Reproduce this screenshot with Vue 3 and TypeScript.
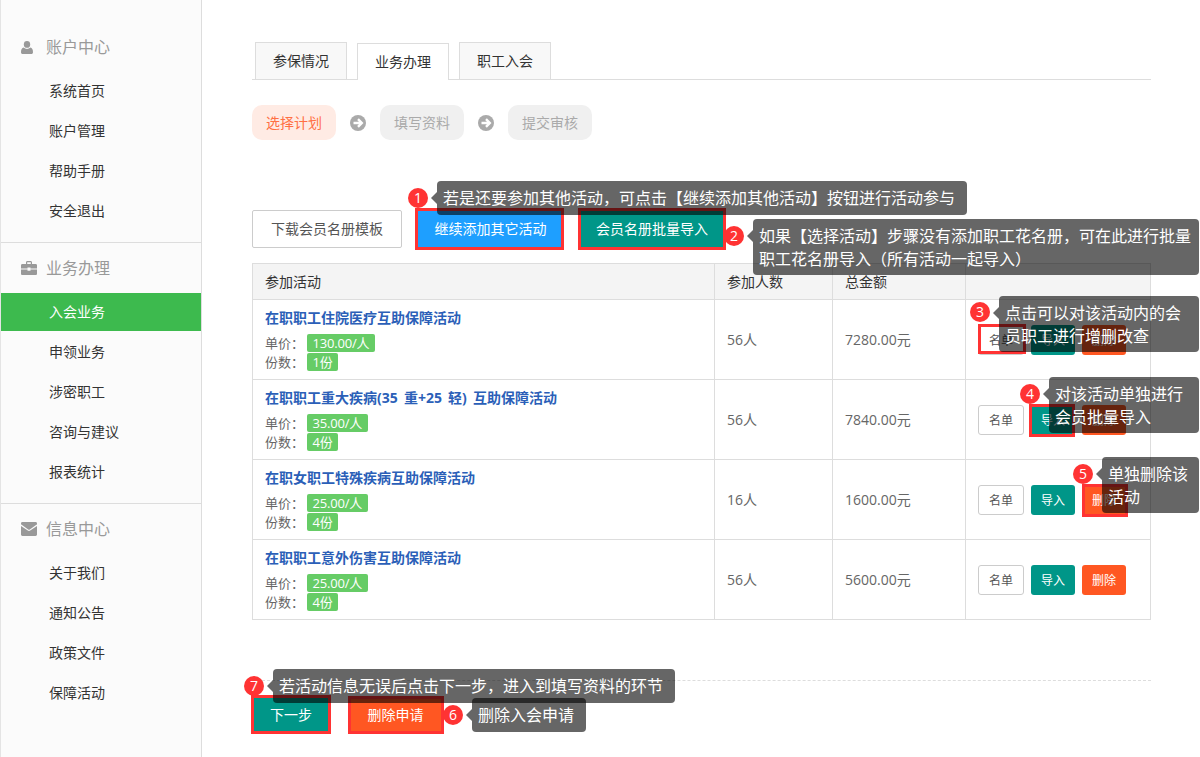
<script setup lang="ts">
interface NavGroup { title: string; icon: 'user' | 'case' | 'mail'; items: string[] }
const nav: NavGroup[] = [
  { title: '账户中心', icon: 'user', items: ['系统首页', '账户管理', '帮助手册', '安全退出'] },
  { title: '业务办理', icon: 'case', items: ['入会业务', '申领业务', '涉密职工', '咨询与建议', '报表统计'] },
  { title: '信息中心', icon: 'mail', items: ['关于我们', '通知公告', '政策文件', '保障活动'] },
]
const tabs = ['参保情况', '业务办理', '职工入会']
const rows = [
  { name: '在职职工住院医疗互助保障活动', price: '130.00/人', share: '1份', people: '56人', total: '7280.00元' },
  { name: '在职职工重大疾病(35 重+25 轻) 互助保障活动', price: '35.00/人', share: '4份', people: '56人', total: '7840.00元' },
  { name: '在职女职工特殊疾病互助保障活动', price: '25.00/人', share: '4份', people: '16人', total: '1600.00元' },
  { name: '在职职工意外伤害互助保障活动', price: '25.00/人', share: '4份', people: '56人', total: '5600.00元' },
]
const notes = [
  { id: 1, text: '若是还要参加其他活动，可点击【继续添加其他活动】按钮进行活动参与' },
  { id: 2, text: '如果【选择活动】步骤没有添加职工花名册，可在此进行批量职工花名册导入（所有活动一起导入）' },
  { id: 3, text: '点击可以对该活动内的会员职工进行增删改查' },
  { id: 4, text: '对该活动单独进行会员批量导入' },
  { id: 5, text: '单独删除该活动' },
  { id: 6, text: '删除入会申请' },
  { id: 7, text: '若活动信息无误后点击下一步，进入到填写资料的环节' },
]
const frames = ['f1', 'f2', 'f3', 'f4', 'f5', 'f6', 'f7']
</script>

<template>
  <div class="page">
    <aside class="side">
      <section v-for="g in nav" :key="g.title" class="group">
        <h3 class="group-title">
          <span class="icon-box">
            <svg v-if="g.icon === 'user'" width="12" height="13" viewBox="0 0 12 13"><ellipse cx="6" cy="3.4" rx="3.2" ry="3.4" fill="#999" /><path d="M0 11.2C0 8.6 1 7 2.6 6.6 3.6 7.5 4.7 7.9 6 7.9s2.400-.4 3.400-1.300C11 7 12 8.600 12 11.200 12 12.300 11.300 13 10.300 13H1.700C.7 13 0 12.300 0 11.200z" fill="#999" /></svg>
            <svg v-else-if="g.icon === 'case'" width="16" height="14" viewBox="0 0 16 14"><path d="M5 3V1.500C5 .7 5.600 0 6.400 0h3.200C10.400 0 11 .7 11 1.500V3H9.800V1.300H6.200V3z" fill="#999" /><path d="M1.300 3h13.400c.7 0 1.300.6 1.300 1.300V7.500H9.500V6.500h-3v1H0V4.300C0 3.600.6 3 1.300 3zM0 8.500h6.500v1.300h3V8.500H16v4.200c0 .7-.6 1.300-1.300 1.300H1.300C.6 14 0 13.400 0 12.700z" fill="#999" /></svg>
            <svg v-else width="16" height="14" viewBox="0 0 16 14"><path d="M1.400 0h13.200C15.400 0 16 .6 16 1.400c0 .7-.5 1.300-1 1.700L8.800 7.400c-.5.300-1.100.3-1.600 0L1 3.100C.5 2.700 0 2.100 0 1.400 0 .6.600 0 1.400 0z" fill="#999" /><path d="M0 4.100l6.800 4.500c.7.500 1.700.5 2.400 0L16 4.100v8.500c0 .8-.6 1.400-1.400 1.400H1.400C.6 14 0 13.400 0 12.600z" fill="#999" /></svg>
          </span>
          <span class="group-name">{{ g.title }}</span>
        </h3>
        <a v-for="item in g.items" :key="item" class="nav-item" :class="{ active: item === '入会业务' }">{{ item }}</a>
      </section>
    </aside>

    <main class="main">
      <nav class="tabs">
        <a v-for="t in tabs" :key="t" class="tab" :class="{ current: t === '业务办理' }">{{ t }}</a>
      </nav>

      <div class="steps">
        <span class="step on">选择计划</span>
        <svg class="step-arrow" width="16" height="16" viewBox="0 0 16 16"><circle cx="8" cy="8" r="8" fill="#aaa" /><path d="M3.500 8h8M8 4.200 11.800 8 8 11.800" fill="none" stroke="#fff" stroke-width="2.400" /></svg>
        <span class="step">填写资料</span>
        <svg class="step-arrow" width="16" height="16" viewBox="0 0 16 16"><circle cx="8" cy="8" r="8" fill="#aaa" /><path d="M3.500 8h8M8 4.200 11.800 8 8 11.800" fill="none" stroke="#fff" stroke-width="2.400" /></svg>
        <span class="step">提交审核</span>
      </div>

      <div class="actions">
        <button class="btn outline wide">下载会员名册模板</button>
        <button class="btn blue add">继续添加其它活动</button>
        <button class="btn teal batch">会员名册批量导入</button>
      </div>

      <table class="grid">
        <colgroup>
          <col class="c-a" /><col class="c-b" /><col class="c-c" /><col class="c-d" />
        </colgroup>
        <thead>
          <tr><th>参加活动</th><th>参加人数</th><th>总金额</th><th></th></tr>
        </thead>
        <tbody>
          <tr v-for="r in rows" :key="r.name">
            <td class="info">
              <a class="title">{{ r.name }}</a>
              <div class="line"><span class="label">单价：</span><span class="badge">{{ r.price }}</span></div>
              <div class="line"><span class="label">份数：</span><span class="badge">{{ r.share }}</span></div>
            </td>
            <td class="num">{{ r.people }}</td>
            <td class="num">{{ r.total }}</td>
            <td>
              <div class="ops">
                <button class="mini outline">名单</button>
                <button class="mini teal">导入</button>
                <button class="mini orange">删除</button>
              </div>
            </td>
          </tr>
        </tbody>
      </table>

      <div class="foot">
        <button class="btn teal next">下一步</button>
        <button class="btn orange drop">删除申请</button>
      </div>
    </main>

    <i v-for="f in frames" :key="f" class="frame" :class="f"></i>
    <template v-for="n in notes" :key="n.id">
      <span class="dot" :class="'d' + n.id">{{ n.id }}</span>
      <div class="note" :class="'n' + n.id">{{ n.text }}</div>
    </template>
  </div>
</template>

<style>
html, body { margin: 0; padding: 0; background: #fff; }
</style>

<style scoped>
.page {
  position: relative;
  display: flex;
  width: 1200px;
  height: 757px;
  overflow: hidden;
  background: #fff;
  color: #333;
  font-family: "Open Sans", "Noto Sans CJK SC", sans-serif;
  font-size: 14px;
}
.side {
  box-sizing: border-box;
  flex: none;
  width: 202px;
  padding-top: 22px;
  background: #fbfbfb;
  border-left: 1px solid #e4e4e4;
  border-right: 1px solid #ddd;
}
.group { padding: 10px 0; border-bottom: 1px solid #ddd; }
.group:last-child { border-bottom: 0; }
.group-title {
  display: flex;
  align-items: center;
  height: 30px;
  margin: 0 0 10px;
  padding-left: 20px;
  color: #999;
  font-size: 16px;
  font-weight: 400;
}
.group-name { margin-top: -2px; }
.icon-box { display: flex; width: 25px; }
.nav-item {
  display: block;
  height: 38px;
  margin-bottom: 2px;
  padding-left: 48px;
  color: #333;
  line-height: 38px;
}
.nav-item.active { background: #3dba4e; color: #fff; }
.main {
  flex: none;
  width: 899px;
  margin-left: 50px;
  padding-top: 42px;
}
.tabs {
  display: flex;
  gap: 10px;
  height: 37px;
  padding-left: 3px;
  border-bottom: 1px solid #ddd;
}
.tab {
  box-sizing: border-box;
  width: 92px;
  height: 37px;
  border: 1px solid #ddd;
  border-bottom: 0;
  background: #f8f8f8;
  line-height: 36px;
  text-align: center;
}
.tab.current { height: 37px; margin-top: 1px; background: #fff; }
.steps { display: flex; align-items: center; margin-top: 25px; }
.step {
  width: 84px;
  height: 35px;
  border-radius: 10px;
  background: #f0f0f0;
  color: #aaa;
  line-height: 35px;
  text-align: center;
}
.step.on { background: #ffebe4; color: #ff7043; }
.step-arrow { margin: 0 14px; }
.actions { display: flex; margin-top: 70px; }
.btn {
  box-sizing: border-box;
  height: 38px;
  padding: 0 0 2px;
  border: 0;
  border-radius: 2px;
  font: inherit;
  color: #fff;
  text-align: center;
}
.wide { width: 150px; }
.outline { border: 1px solid #ccc; background: #fff; color: #555; }
.blue { background: #1e9fff; }
.teal { background: #009688; }
.orange { background: #ff5722; }
.add { width: 147px; margin-left: 15px; }
.batch { width: 148px; margin-left: 14px; }
.grid {
  width: 898px;
  margin-top: 15px;
  border-collapse: collapse;
  table-layout: fixed;
  color: #666;
}
.c-a { width: 462px; }
.c-b { width: 118px; }
.c-c { width: 133px; }
.c-d { width: 185px; }
.grid th, .grid td {
  padding: 0 12px;
  border: 1px solid #ddd;
  font-weight: 400;
  text-align: left;
}
.grid th { height: 33px; padding-bottom: 2px; background: #f4f4f4; color: #333; }
.grid td { height: 79px; }
.grid td.num { height: 78px; padding-bottom: 1px; }
.grid td.info { height: 70px; padding-top: 9px; vertical-align: top; font-size: 13px; }
.title {
  display: block;
  height: 18px;
  margin-bottom: 7px;
  color: #2b5fb8;
  font-size: 14px;
  font-weight: 700;
  line-height: 18px;
  word-spacing: 2.500px;
}
.line { display: flex; align-items: center; height: 18px; margin-bottom: 1px; }
.label { width: 42px; margin-top: -1px; }
.badge {
  height: 18px;
  padding: 0 5.500px;
  border-radius: 2px;
  background: #66cc66;
  color: #fff;
  letter-spacing: -0.200px;
  line-height: 18px;
}
.ops { display: flex; gap: 7px; }
.mini {
  box-sizing: border-box;
  width: 44px;
  height: 30px;
  padding: 0;
  border: 0;
  border-radius: 3px;
  color: #fff;
  font: inherit;
  font-size: 12px;
}
.mini.outline { width: 46px; border: 1px solid #ccc; color: #555; }
.foot {
  display: flex;
  margin-top: 60px;
  padding-top: 15px;
  border-top: 1px dashed #ddd;
}
.next { width: 78px; }
.drop { width: 93px; margin-left: 19px; }
.frame { position: absolute; box-sizing: border-box; border: 3px solid #ff3333; }
.f1 { left: 415px; top: 208px; width: 149px; height: 42px; }
.f2 { left: 578px; top: 208px; width: 148px; height: 42px; }
.f3 { left: 978px; top: 324px; width: 48px; height: 30px; }
.f4 { left: 1029px; top: 404px; width: 46px; height: 33px; }
.f5 { left: 1082px; top: 484px; width: 46px; height: 33px; }
.f6 { left: 348px; top: 696px; width: 96px; height: 38px; }
.f7 { left: 251px; top: 695px; width: 80px; height: 39px; }
.note {
  position: absolute;
  box-sizing: border-box;
  height: 56px;
  padding: 6px 6px 4px;
  border-radius: 4px;
  background: rgba(0, 0, 0, 0.6);
  color: #fff;
  font-size: 16px;
  line-height: 23px;
}
.note::before {
  content: "";
  position: absolute;
  left: -6px;
  top: 11px;
  border-top: 6px solid transparent;
  border-bottom: 6px solid transparent;
  border-right: 6px solid rgba(0, 0, 0, 0.6);
}
.n1 { left: 437px; top: 181px; width: 530px; height: 34px; }
.n2 { left: 753px; top: 219px; width: 446px; }
.n3 { left: 999px; top: 296px; width: 200px; }
.n4 { left: 1049px; top: 377px; width: 150px; }
.n5 { left: 1102px; top: 457px; width: 97px; }
.n6 { left: 472px; top: 698px; width: 114px; height: 34px; }
.n7 { left: 273px; top: 669px; width: 402px; height: 34px; }
.dot {
  position: absolute;
  width: 20px;
  height: 20px;
  border-radius: 50%;
  background: #ff3333;
  color: #fff;
  font-size: 14px;
  line-height: 20px;
  text-align: center;
}
.d1 { left: 408px; top: 188px; }
.d2 { left: 724px; top: 226px; }
.d3 { left: 970px; top: 302px; }
.d4 { left: 1020px; top: 384px; }
.d5 { left: 1073px; top: 464px; }
.d6 { left: 443px; top: 705px; }
.d7 { left: 244px; top: 676px; }
</style>
